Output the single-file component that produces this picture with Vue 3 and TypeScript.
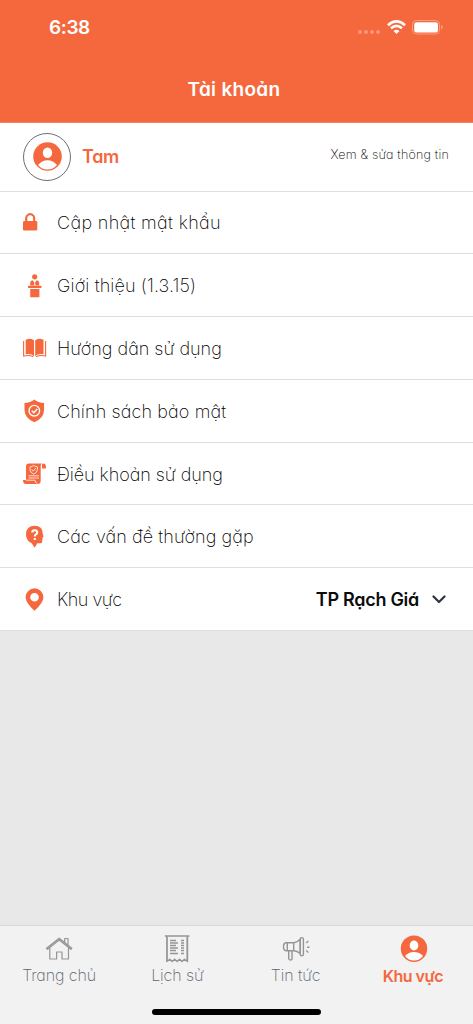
<script setup lang="ts">
interface MenuItem {
  id: string
  label: string
}

const menu: MenuItem[] = [
  { id: 'password', label: 'Cập nhật mật khẩu' },
  { id: 'about', label: 'Giới thiệu (1.3.15)' },
  { id: 'guide', label: 'Hướng dân sử dụng' },
  { id: 'privacy', label: 'Chính sách bảo mật' },
  { id: 'terms', label: 'Điều khoản sử dụng' },
  { id: 'faq', label: 'Các vấn đề thường gặp' },
  { id: 'region', label: 'Khu vực' },
]

const tabs: MenuItem[] = [
  { id: 'home', label: 'Trang chủ' },
  { id: 'history', label: 'Lịch sử' },
  { id: 'news', label: 'Tin tức' },
  { id: 'account', label: 'Khu vực' },
]
</script>

<template>
  <div class="screen">
    <header class="header">
      <div class="status">
        <span class="time">6:38</span>
        <div class="indicators">
          <svg class="dots" width="22" height="4" viewBox="0 0 22 4" fill="#fa9678">
            <circle cx="2" cy="2" r="2" /><circle cx="8" cy="2" r="2" />
            <circle cx="14" cy="2" r="2" /><circle cx="20" cy="2" r="2" />
          </svg>
          <svg class="wifi" width="19" height="14" viewBox="0 0 19 14" fill="none" stroke="#fff">
            <path d="M1 5.2Q9.500-2.400 18 5.200" stroke-width="2.600" />
            <path d="M4 8.300Q9.500 3.500 15 8.300" stroke-width="2.500" />
            <path d="M9.500 13.900 6.500 11Q9.500 8.500 12.500 11Z" fill="#fff" stroke="none" />
          </svg>
          <svg class="battery" width="31" height="15" viewBox="0 0 31 15">
            <rect x=".5" y=".5" width="27" height="13.500" rx="4" fill="none" stroke="#fa9e83" />
            <rect x="2.200" y="2.200" width="23.800" height="10.200" rx="2.500" fill="#fff" />
            <path d="M29 4.800Q30.700 5.500 30.700 7.200T29 9.600Z" fill="#fa9e83" />
          </svg>
        </div>
      </div>
      <h1 class="title">Tài khoản</h1>
    </header>

    <section class="profile">
      <div class="avatar">
        <svg width="29" height="29" viewBox="0 0 29 29">
          <circle cx="14.500" cy="14.500" r="14.300" fill="#f5683e" />
          <ellipse cx="14.500" cy="10.700" rx="4.700" ry="5.300" fill="#fff" />
          <path d="M5 23Q9 18.200 14.500 18.200T24 23Q20 27.500 14.500 27.500T5 23Z" fill="#fff" />
        </svg>
      </div>
      <strong class="name">Tam</strong>
      <span class="edit">Xem &amp; sửa thông tin</span>
    </section>

    <ul class="menu">
      <li v-for="item in menu" :key="item.id" class="row">
        <svg class="icon" width="24" height="24" viewBox="0 0 24 24" fill="#f5683e">
          <template v-if="item.id === 'password'">
            <path d="M3.200 10.500V7.500a4 4.300 0 0 1 8 0V10.500" fill="none" stroke="#f5683e" stroke-width="2.200" />
            <rect x="0" y="10" width="14.300" height="9.500" rx="1.300" />
          </template>
          <template v-else-if="item.id === 'about'">
            <circle cx="11.700" cy="2.800" r="2.600" />
            <path d="M7.200 11.500V9Q7.300 6.500 9.700 6.200L11.700 9l2-2.800q2.400.3 2.500 2.800v2.500Z" />
            <path d="m11.700 7-.8 4.500h1.600Z" fill="#fff" />
            <rect x="5" y="11.700" width="13.400" height="2.400" rx=".6" />
            <rect x="7.200" y="15" width="9.200" height="8.300" rx=".5" />
          </template>
          <template v-else-if="item.id === 'guide'">
            <path d="M2.700 3.800Q8.300 1.300 11 4.500V20.200Q8.500 17.300 2.700 18.200Z" />
            <path d="M20.500 3.800Q14.900 1.300 12.200 4.500V20.200Q14.700 17.300 20.500 18.200Z" />
            <path d="M.6 5V20Q6.500 18.700 10.200 20.700M22.600 5V20Q16.700 18.700 13 20.700" fill="none" stroke="#f5683e" stroke-width="1.100" />
          </template>
          <template v-else-if="item.id === 'privacy'">
            <path d="M11.300.4Q15.300 3.700 21.100 4V10.500Q20.900 19.500 11.300 23.200Q1.700 19.500 1.500 10.500V4Q7.300 3.700 11.300.4Z" />
            <circle cx="11.300" cy="11.700" r="5.300" fill="none" stroke="#fff" stroke-width="1.300" />
            <path d="m8.800 11.700 2 2 3.500-3.800" fill="none" stroke="#fff" stroke-width="1.500" />
          </template>
          <template v-else-if="item.id === 'terms'">
            <path d="M6 1.500H18.500Q17.700 2.500 17.700 4.500V18.500Q17.700 22 14.700 22H3Q0 22 0 18H3V4.500Q3 1.500 6 1.500Z" />
            <path d="M19.900 1.500Q22.900 1.500 22.900 4.500V6.500H19V2.800Q19 1.500 19.900 1.500Z" />
            <path d="M3 18.200H12Q12.200 21 14.300 21.200" fill="none" stroke="#fff" stroke-width=".8" />
            <path d="M10.700 3.500q1.800 1.200 3.700 1.300v3Q14.100 10.700 10.700 12.200 7.300 10.700 7 7.800V4.800Q8.900 4.700 10.700 3.500ZM8.700 7.500l1.500 1.600 2.700-3M5.500 13.800h10.500M5.500 16h10.500" fill="none" stroke="#fff" stroke-width=".8" />
          </template>
          <template v-else-if="item.id === 'faq'">
            <path d="M11.700.8C16.700.8 19.700 3.800 19.600 8L20.500 11.800Q20.500 12.400 19.600 12.500L19.200 17Q19 18.500 16.500 18.200H14.300L11.700 22.800 8.700 18.200Q3 15.700 3 9.300 3.300.8 11.700.8Z" />
            <path d="M9.200 7.500Q9.200 5.200 11.700 5.200T14.200 7.500Q14.200 8.800 12.900 9.400 11.800 10 11.800 11.500M11.800 12.900V14.900" fill="none" stroke="#fff" stroke-width="2.100" />
          </template>
          <path v-else fill-rule="evenodd" d="M11.500.3A8.900 8.900 0 0 1 20.400 9.200Q20.400 14.700 11.500 22.800 2.600 14.700 2.600 9.200A8.900 8.900 0 0 1 11.500.3ZM11.500 4.900a4.300 4.300 0 1 0 0 8.600 4.300 4.300 0 0 0 0-8.600Z" />
        </svg>
        <span class="label" :class="item.id">{{ item.label }}</span>
        <div v-if="item.id === 'region'" class="select">
          <span>TP Rạch Giá</span>
          <svg width="14" height="9" viewBox="0 0 14 9" fill="none" stroke="#2d343c" stroke-width="2.200" stroke-linecap="round" stroke-linejoin="round">
            <path d="m1.500 1.500 5.500 5.500 5.500-5.500" />
          </svg>
        </div>
      </li>
    </ul>

    <nav class="tabs">
      <a v-for="tab in tabs" :key="tab.id" class="tab" :class="tab.id">
        <svg width="28" height="28" viewBox="0 0 28 28" fill="none" stroke="#959595" stroke-width="1.200" stroke-linejoin="round">
          <path v-if="tab.id === 'home'" d="M4.800 12.800V24H11.600V17H17V24H23.500V12.800M1.500 13.300 14.200 3.200 26.800 13.300l-.9 1L14.200 5 2.500 14.300ZM19.700 7.300V3.500H23V10" />
          <template v-else-if="tab.id === 'history'">
            <path d="M1.800 1H26.400M3.800 1V26.500L6.800 24.200 9.200 26.500 11.700 24.200 14.100 26.500 16.600 24.200 19 26.500 21.500 24.200 24.500 26.500V1" stroke-width="1.400" />
            <path d="M7 5.500h6M7 8h8M7 10.500h6M7 13h8M7 15.500h6M7 18.500h8M18 5.500h3M18 8h3M18 10.500h3M18 13h3M18 15.500h3M18 18.500h3" stroke-width="1.400" />
            <path d="M4.500 2V25M23.800 2V25" stroke-width=".7" />
          </template>
          <g v-else-if="tab.id === 'news'" stroke-width="1.400">
            <path d="M5.300 7.800V15.800H4Q1.500 15.500 1.500 11.800T4 7.800H12Q15 7.500 18.200 4.200V18.500Q15 16 12 15.800H5.300M11.700 8V15.800M6.700 16V23.500Q6.800 25 8.500 25T10 23.500V16" />
            <rect x="18.200" y="2.600" width="3.200" height="18.200" rx="1.600" />
            <path d="M24.200 8 26.300 6M25 12.200H27.500M24.200 15.500 26.300 17.500" />
          </g>
          <g v-else stroke="none">
            <circle cx="14" cy="13.700" r="13.200" fill="#f5683e" />
            <ellipse cx="14" cy="10.500" rx="4.300" ry="4.900" fill="#fff" />
            <path d="M5 21Q8.500 17 14 17T23 21Q19.500 25.500 14 25.500T5 21Z" fill="#fff" />
          </g>
        </svg>
        <span>{{ tab.label }}</span>
      </a>
      <div class="home-indicator"></div>
    </nav>
  </div>
</template>

<style>
body {
  margin: 0;
}
</style>

<style scoped>
.screen {
  display: flex;
  flex-direction: column;
  width: 473px;
  height: 1024px;
  overflow: hidden;
  background: #e8e8e8;
  color: #000;
  font-family: Inter, "Noto Sans", sans-serif;
  font-feature-settings: "cv11";
}
.header {
  box-sizing: border-box;
  height: 123px;
  flex: none;
  background: #f5683e;
  border-bottom: 1px solid #f28668;
  color: #fff;
}
.status {
  display: flex;
  justify-content: space-between;
  align-items: center;
  height: 54px;
  padding: 0 31px 0 49px;
}
.time {
  font-size: 19px;
  font-weight: 600;
  letter-spacing: -0.4px;
  font-feature-settings: normal;
}
.indicators {
  display: flex;
  align-items: center;
}
.dots {
  margin: 10px 7px 0 0;
}
.wifi {
  margin-right: 6px;
}
.battery {
  margin-right: -1px;
}
.title {
  margin: 22px 0 0;
  padding-right: 5px;
  font-size: 19px;
  line-height: 28px;
  font-weight: 600;
  letter-spacing: 0.3px;
  text-align: center;
}
.profile {
  box-sizing: border-box;
  display: flex;
  align-items: center;
  flex: none;
  height: 68.500px;
  padding: 0 24px 0 23px;
  background: #fff;
  border-bottom: 1px solid #dedede;
}
.avatar {
  box-sizing: border-box;
  display: flex;
  align-items: center;
  justify-content: center;
  width: 48px;
  height: 48px;
  border: 1px solid #68707a;
  border-radius: 50%;
}
.name {
  margin-left: 11px;
  color: #f5683e;
  font-size: 18px;
  font-weight: 600;
  letter-spacing: -0.3px;
}
.edit {
  margin: -5px 0 0 auto;
  font-size: 12.500px;
  font-weight: 200;
  letter-spacing: 0.21px;
}
.menu {
  flex: none;
  margin: 0;
  padding: 0;
  list-style: none;
}
.row {
  box-sizing: border-box;
  display: flex;
  align-items: center;
  height: 62.800px;
  padding: 1px 27px 0 23px;
  background: #fff;
  border-bottom: 1px solid #dedede;
}
.icon {
  flex: none;
  margin-right: 10px;
}
.label {
  font-size: 18px;
  font-weight: 200;
  white-space: nowrap;
}
.password {
  letter-spacing: 0.34px;
}
.about {
  letter-spacing: 0.13px;
}
.privacy {
  letter-spacing: 0.12px;
}
.guide {
  letter-spacing: -0.01px;
}
.terms {
  letter-spacing: -0.06px;
}
.faq {
  letter-spacing: 0.08px;
}
.region {
  letter-spacing: -0.5px;
}
.select {
  display: flex;
  align-items: center;
  gap: 13px;
  margin-left: auto;
  color: #0c0c0c;
  font-size: 18px;
  font-weight: 600;
  letter-spacing: -0.28px;
  white-space: nowrap;
}
.tabs {
  box-sizing: border-box;
  display: grid;
  grid-template-columns: repeat(4, 1fr);
  grid-template-rows: 82px 6px;
  height: 99px;
  margin-top: auto;
  background: #f2f2f2;
  border-top: 1px solid #d8d8d8;
}
.tab {
  display: flex;
  flex-direction: column;
  align-items: center;
  padding-top: 9px;
  color: #5c646f;
  font-size: 16px;
  line-height: 24px;
  font-weight: 200;
  letter-spacing: -0.1px;
}
.account {
  color: #f5683e;
  font-weight: 600;
  letter-spacing: -0.5px;
}
.account span {
  margin: 1px 2px 0 0;
}
.home-indicator {
  grid-column: 1 / -1;
  justify-self: center;
  width: 169px;
  height: 6px;
  margin-top: 1px;
  border-radius: 3px;
  background: #000;
}
</style>
